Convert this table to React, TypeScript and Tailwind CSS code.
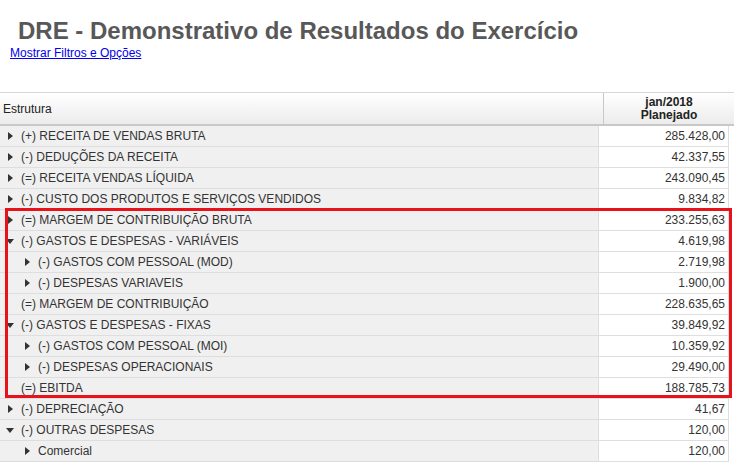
import React from 'react'

type Row = { label: string; value: string; level: 1 | 2; toggle: 'right' | 'down' | 'none' }

const rows: Row[] = [
  { label: '(+) RECEITA DE VENDAS BRUTA', value: '285.428,00', level: 1, toggle: 'right' },
  { label: '(-) DEDUÇÕES DA RECEITA', value: '42.337,55', level: 1, toggle: 'right' },
  { label: '(=) RECEITA VENDAS LÍQUIDA', value: '243.090,45', level: 1, toggle: 'right' },
  { label: '(-) CUSTO DOS PRODUTOS E SERVIÇOS VENDIDOS', value: '9.834,82', level: 1, toggle: 'right' },
  { label: '(=) MARGEM DE CONTRIBUIÇÃO BRUTA', value: '233.255,63', level: 1, toggle: 'right' },
  { label: '(-) GASTOS E DESPESAS - VARIÁVEIS', value: '4.619,98', level: 1, toggle: 'down' },
  { label: '(-) GASTOS COM PESSOAL (MOD)', value: '2.719,98', level: 2, toggle: 'right' },
  { label: '(-) DESPESAS VARIAVEIS', value: '1.900,00', level: 2, toggle: 'right' },
  { label: '(=) MARGEM DE CONTRIBUIÇÃO', value: '228.635,65', level: 1, toggle: 'none' },
  { label: '(-) GASTOS E DESPESAS - FIXAS', value: '39.849,92', level: 1, toggle: 'down' },
  { label: '(-) GASTOS COM PESSOAL (MOI)', value: '10.359,92', level: 2, toggle: 'right' },
  { label: '(-) DESPESAS OPERACIONAIS', value: '29.490,00', level: 2, toggle: 'right' },
  { label: '(=) EBITDA', value: '188.785,73', level: 1, toggle: 'none' },
  { label: '(-) DEPRECIAÇÃO', value: '41,67', level: 1, toggle: 'right' },
  { label: '(-) OUTRAS DESPESAS', value: '120,00', level: 1, toggle: 'down' },
  { label: 'Comercial', value: '120,00', level: 2, toggle: 'right' },
]

function Toggle({ dir }: { dir: Row['toggle'] }) {
  if (dir === 'none') return <span className="inline-block w-[12px]" />
  return (
    <span className="inline-flex w-[12px] justify-center">
      {dir === 'right' ? (
        <svg width="5" height="8" viewBox="0 0 5 8"><path d="M0 0 L5 4 L0 8 Z" fill="#333" /></svg>
      ) : (
        <svg width="8" height="5" viewBox="0 0 8 5"><path d="M0 0 L8 0 L4 5 Z" fill="#333" /></svg>
      )}
    </span>
  )
}

export default function App() {
  return (
    <div className="w-[734px] h-[465px] overflow-hidden bg-white font-['Liberation_Sans',Arial,sans-serif]">
      <h1 className="pl-[18px] pt-[17px] text-[24px] font-bold leading-[28px] text-[#585858]">
        DRE - Demonstrativo de Resultados do Exercício
      </h1>
      <a href="#" className="ml-[10px] mt-[1px] block text-[12px] leading-[14px] text-[#0000ee] underline w-fit">
        Mostrar Filtros e Opções
      </a>

      <div className="relative mt-[32px]">
        {/* cabeçalho */}
        <div className="flex h-[34px] border-t border-[#d8d8d8] border-b-2 border-b-[#c8c8c8] bg-gradient-to-b from-white to-[#ececec] text-[12px] text-[#222]">
          <div className="w-[604px] flex items-center pl-[3px] border-r border-[#c8c8c8]">Estrutura</div>
          <div className="flex-1 flex flex-col items-center justify-center font-bold leading-[13px]">
            <span>jan/2018</span>
            <span>Planejado</span>
          </div>
        </div>

        {/* corpo */}
        {rows.map((r, i) => (
          <div key={i} className="flex h-[21px] text-[12px] text-[#333]">
            <div className={`w-[598px] flex items-center bg-[#f0f0f0] border-b border-[#dedede] ${r.level === 2 ? 'pl-[21px]' : 'pl-[4px]'}`}>
              <Toggle dir={r.toggle} />
              <span className="ml-[5px]">{r.label}</span>
            </div>
            <div className="w-[131px] flex items-center justify-end pr-[3px] bg-white border-b border-l border-r border-[#dedede]">
              {r.value}
            </div>
          </div>
        ))}

        {/* destaque */}
        <div className="pointer-events-none absolute left-[5px] top-[116px] w-[727px] h-[190px] border-[3px] border-[#e8131a]" />
      </div>
    </div>
  )
}
